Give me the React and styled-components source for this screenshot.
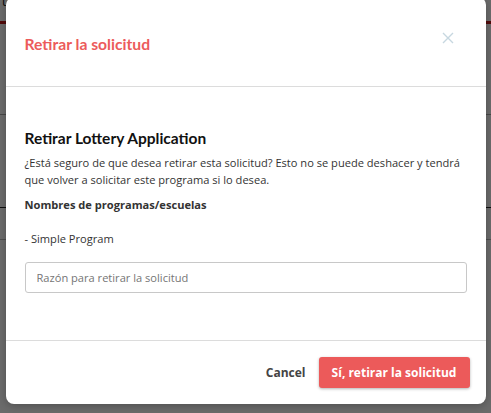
import React from 'react';
import styled, { createGlobalStyle } from 'styled-components';

const GlobalStyle = createGlobalStyle`
  html, body {
    margin: 0;
    padding: 0;
    background: #fff;
    font-family: "Open Sans", "Liberation Sans", sans-serif;
  }
  * { box-sizing: border-box; }
`;

// page behind the overlay
const Page = styled.div`
  position: relative;
  width: 491px;
  height: 413px;
  overflow: hidden;
  background: #fff;
`;

const PageTop = styled.div`
  height: 24px;
  padding: 0 2px;
  font-size: 13px;
  line-height: 8px;
  color: #222;
  margin-top: -3px;
`;

const RedBar = styled.div`
  height: 3px;
  background: #c21a1a;
`;

const PageLine = styled.div`
  margin-top: ${(p) => p.gap}px;
  height: 1px;
  background: ${(p) => p.color};
`;

const Backdrop = styled.div`
  position: absolute;
  inset: 0;
  background: rgba(0, 0, 0, 0.58);
  display: flex;
  justify-content: center;
  align-items: flex-start;
`;

const Modal = styled.div`
  width: 480px;
  margin-top: -3px;
  background: #fff;
  border-radius: 8px;
  box-shadow: 0 2px 8px rgba(0, 0, 0, 0.25);
  display: flex;
  flex-direction: column;
`;

const Header = styled.div`
  height: 90px;
  padding: 37px 31px 0 19px;
  display: flex;
  justify-content: space-between;
  align-items: flex-start;
  border-bottom: 1px solid #dcdcdc;
`;

const Title = styled.h2`
  margin: 0;
  font-family: "Lato", "Liberation Sans", sans-serif;
  font-weight: 700;
  font-size: 15.7px;
  line-height: 20px;
  color: #ec5b5b;
`;

const CloseButton = styled.button`
  margin-top: -3px;
  width: 14px;
  height: 14px;
  padding: 0;
  border: none;
  background: none;
  cursor: pointer;
  display: flex;
  align-items: center;
  justify-content: center;
`;

const Body = styled.div`
  padding: 41px 19px 47px 19px;
  border-bottom: 1px solid #dcdcdc;
  display: flex;
  flex-direction: column;
`;

const Heading = styled.h3`
  margin: 0;
  font-family: "Lato", "Liberation Sans", sans-serif;
  font-weight: 700;
  font-size: 15.5px;
  line-height: 20px;
  color: #111;
`;

const Text = styled.p`
  margin: ${(p) => p.top}px 0 0;
  font-size: 11.1px;
  line-height: 17px;
  font-weight: ${(p) => (p.bold ? 700 : 400)};
  color: #333;
`;

const ReasonInput = styled.input`
  margin-top: 15px;
  width: 100%;
  height: 31px;
  border: 1px solid #c8c8c8;
  border-radius: 3px;
  padding: 0 11px;
  font-family: "Open Sans", "Liberation Sans", sans-serif;
  font-size: 11.1px;
  color: #333;
  outline: none;

  &::placeholder {
    color: #757575;
  }
`;

const Footer = styled.div`
  height: 63px;
  padding: 16px 16px 0;
  display: flex;
  justify-content: flex-end;
  align-items: flex-start;
  gap: 13px;
`;

const CancelButton = styled.button`
  height: 31px;
  padding: 0;
  border: none;
  background: none;
  font-family: "Open Sans", "Liberation Sans", sans-serif;
  font-weight: 700;
  font-size: 12px;
  color: #444;
  cursor: pointer;
`;

const ConfirmButton = styled.button`
  height: 31px;
  width: 151px;
  border: none;
  border-radius: 3px;
  background: #ec5a5a;
  color: #fff;
  font-family: "Open Sans", "Liberation Sans", sans-serif;
  font-weight: 700;
  font-size: 12px;
  box-shadow: 0 1px 3px rgba(0, 0, 0, 0.3);
  cursor: pointer;
`;

const CloseIcon = () => (
  <svg width="12" height="12" viewBox="0 0 12 12">
    <path d="M1 1L11 11M11 1L1 11" stroke="#c7d7e0" strokeWidth="1.4" />
  </svg>
);

export default function App() {
  return (
    <Page>
      <GlobalStyle />
      <PageTop>u</PageTop>
      <RedBar />
      <PageLine gap={90} color="#aaa" />
      <PageLine gap={92} color="#222" />
      <PageLine gap={31} color="#bbb" />
      <Backdrop>
        <Modal>
          <Header>
            <Title>Retirar la solicitud</Title>
            <CloseButton aria-label="Cerrar">
              <CloseIcon />
            </CloseButton>
          </Header>
          <Body>
            <Heading>Retirar Lottery Application</Heading>
            <Text top={6}>
              ¿Está seguro de que desea retirar esta solicitud? Esto no se puede deshacer y tendrá
              que volver a solicitar este programa si lo desea.
            </Text>
            <Text top={8} bold>Nombres de programas/escuelas</Text>
            <Text top={17}>- Simple Program</Text>
            <ReasonInput placeholder="Razón para retirar la solicitud" />
          </Body>
          <Footer>
            <CancelButton>Cancel</CancelButton>
            <ConfirmButton>Sí, retirar la solicitud</ConfirmButton>
          </Footer>
        </Modal>
      </Backdrop>
    </Page>
  );
}
